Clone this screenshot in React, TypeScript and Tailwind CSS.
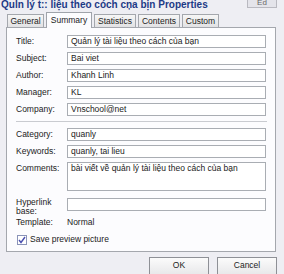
import React from "react";

const rows1 = [
  { label: "Title:", value: "Quản lý tài liệu theo cách của bạn" },
  { label: "Subject:", value: "Bai viet" },
  { label: "Author:", value: "Khanh Linh" },
  { label: "Manager:", value: "KL" },
  { label: "Company:", value: "Vnschool@net" },
];

function Field({ value, h = 13 }: { value: string; h?: number }) {
  return (
    <div
      className="w-[199px] border border-[#a9adb3] bg-white pl-[3px] text-[#1a1a1a] leading-[11px] overflow-hidden whitespace-nowrap"
      style={{ height: h }}
    >
      {value}
    </div>
  );
}

function Row({ label, value, h = 13 }: { label: string; value: string; h?: number }) {
  return (
    <div className="flex items-start">
      <div className="w-[51px] leading-[13px] text-[#222]">{label}</div>
      <Field value={value} h={h} />
    </div>
  );
}

export default function App() {
  const tabs = [
    { name: "General", w: 37 },
    { name: "Summary", w: 46, active: true },
    { name: "Statistics", w: 42 },
    { name: "Contents", w: 42 },
    { name: "Custom", w: 37 },
  ];
  return (
    <div className="w-[284px] h-[274px] overflow-hidden bg-[#eeeef3] font-['Liberation_Sans',sans-serif] text-[8.5px] text-[#222]">
      <div className="flex h-[12px] justify-between pr-[7px]">
        <div className="-mt-[1px] pl-[1px] font-bold text-[10px] leading-[11px] text-[#1d3a86] whitespace-nowrap">
          Quln lý t:: liệu theo cóch cņa bịn Properties
        </div>
        <div className="-mt-[4px] h-[12px] w-[30px] border border-[#b9b9c0] bg-[#e4e4ea] text-center text-[8px] leading-[12px] text-[#666]">
          Ed
        </div>
      </div>
      <div className="flex h-[15px] items-end gap-[2px] pl-[7px] relative z-10">
        {tabs.map((t) =>
          t.active ? (
            <div
              key={t.name}
              className="h-[16px] -mb-px border border-b-0 border-[#9fa3aa] bg-[#fcfcfe] text-center leading-[14px] text-[#222]"
              style={{ width: t.w }}
            >
              {t.name}
            </div>
          ) : (
            <div
              key={t.name}
              className="h-[13px] border border-b-0 border-[#a4a7ad] bg-gradient-to-b from-[#f6f6f6] to-[#e2e2e4] text-center leading-[12px] text-[#222]"
              style={{ width: t.w }}
            >
              {t.name}
            </div>
          )
        )}
      </div>
      <div className="ml-[6px] h-[225px] w-[270px] border border-[#a4a7ad] bg-[#fcfcfe] pl-[9px] pt-[7px]">
        <div className="flex flex-col gap-[4px]">
          {rows1.map((r) => (
            <Row key={r.label} label={r.label} value={r.value} />
          ))}
        </div>
        <div className="mt-[5px] mb-[6px] mr-[8px] h-px bg-[#c9cbd0]" />
        <div className="flex flex-col gap-[4px]">
          <Row label="Category:" value="quanly" />
          <Row label="Keywords:" value="quanly, tai lieu" />
          <Row label="Comments:" value="bài viết về quản lý tài liệu theo cách của bạn" h={29} />
        </div>
        <div className="mt-[6px] flex items-start">
          <div className="w-[51px] pt-[1px] leading-[9px] text-[#222]">
            Hyperlink
            <br />
            base:
          </div>
          <div className="mt-[1px]">
            <Field value="" />
          </div>
        </div>
        <div className="mt-[1px] flex leading-[11px]">
          <div className="w-[51px]">Template:</div>
          <div>Normal</div>
        </div>
        <div className="mt-[6px] flex items-center pl-[1px]">
          <div className="flex h-[10px] w-[10px] items-center justify-center border border-[#8a93b8] bg-white">
            <svg width="8" height="8" viewBox="0 0 8 8">
              <path d="M1 4 L3 6.5 L7 1" stroke="#4a4fb0" strokeWidth="1.4" fill="none" />
            </svg>
          </div>
          <div className="ml-[3px] leading-[11px]">Save preview picture</div>
        </div>
      </div>
      <div className="mt-[5px] flex justify-end gap-[8px] pr-[7px]">
        <div className="h-[20px] w-[60px] border border-[#8e9096] bg-gradient-to-b from-[#fbfbfb] to-[#e6e6e8] text-center leading-[14px] text-[#222]">
          OK
        </div>
        <div className="h-[20px] w-[60px] border border-[#8e9096] bg-gradient-to-b from-[#fbfbfb] to-[#e6e6e8] text-center leading-[14px] text-[#222]">
          Cancel
        </div>
      </div>
    </div>
  );
}
